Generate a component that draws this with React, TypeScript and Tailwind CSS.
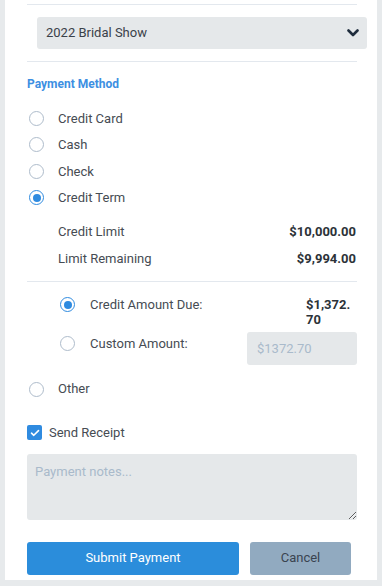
import { useState } from "react"

const methods = ["Credit Card", "Cash", "Check", "Credit Term"]

function Radio({ checked }: { checked?: boolean }) {
  return checked ? (
    <span className="flex h-[15px] w-[15px] shrink-0 items-center justify-center rounded-full border-[1.5px] border-[#2f8be0]">
      <span className="h-[8px] w-[8px] rounded-full bg-[#2f8be0]" />
    </span>
  ) : (
    <span className="h-[15px] w-[15px] shrink-0 rounded-full border-[1.5px] border-[#aebccb]" />
  )
}

export default function App() {
  const [method, setMethod] = useState("Credit Term")

  return (
    <div className="min-h-screen bg-[#e7eaec] font-['Roboto',sans-serif] text-[13px] text-[#464c53]">
      <div className="ml-[5px] h-[580px] w-[372px] bg-white pl-[22px] pr-[20px] pt-[4px]">
        <div className="h-px bg-[#e3e8ee]" />

        <div className="ml-[10px] mr-[-10px] mt-[12px] flex h-[32px] items-center justify-between rounded-[3px] bg-[#e5e8ea] pl-[9px] pr-[8px] text-[#3a4149]">
          <span>2022 Bridal Show</span>
          <svg width="12" height="8" viewBox="0 0 12 8">
            <path d="M1.5 1.5 L6 6 L10.5 1.5" fill="none" stroke="#1f2d3d" strokeWidth="2.6" strokeLinecap="round" strokeLinejoin="round" />
          </svg>
        </div>

        <div className="mt-[12px] h-px bg-[#e3e8ee]" />

        <div className="mt-[14px] text-[12px] font-bold leading-[16px] text-[#3d8fe2]">Payment Method</div>

        <div className="mt-[13px] flex flex-col">
          {methods.map((m) => (
            <label key={m} onClick={() => setMethod(m)} className="flex h-[26.5px] cursor-pointer items-center">
              <span className="ml-[2px] flex w-[29px]">
                <Radio checked={method === m} />
              </span>
              <span>{m}</span>
            </label>
          ))}
        </div>

        <div className="mt-[7px] flex flex-col pl-[31px]">
          <div className="flex h-[27px] items-center justify-between">
            <span>Credit Limit</span>
            <span className="mr-[1px] font-bold text-[#2c3238]">$10,000.00</span>
          </div>
          <div className="flex h-[27px] items-center justify-between">
            <span>Limit Remaining</span>
            <span className="mr-[1px] font-bold text-[#2c3238]">$9,994.00</span>
          </div>
        </div>

        <div className="mt-[9px] h-px bg-[#e3e8ee]" />

        <div className="mt-[14px] flex items-start pl-[33px]">
          <span className="mt-[1px] flex w-[30px]">
            <Radio checked />
          </span>
          <span className="flex-1 leading-[17px]">Credit Amount Due:</span>
          <span className="mt-[1px] w-[51px] font-bold leading-[15px] text-[#2c3238]">
            $1,372.
            <br />
            70
          </span>
        </div>

        <div className="mt-[5px] flex items-start pl-[33px]">
          <span className="mt-[4px] flex w-[30px]">
            <Radio />
          </span>
          <span className="mt-[4px] flex-1 leading-[15px]">Custom Amount:</span>
          <div className="flex h-[33px] w-[110px] items-center rounded-[3px] bg-[#e5e8ea] pl-[10px] text-[#a9bacb]">
            $1372.70
          </div>
        </div>

        <label className="mt-[11px] flex h-[26px] items-center">
          <span className="ml-[2px] flex w-[29px]">
            <Radio checked={method === "Other"} />
          </span>
          <span>Other</span>
        </label>

        <label className="mt-[21px] flex items-center gap-[7px]">
          <span className="flex h-[15px] w-[15px] items-center justify-center rounded-[2px] bg-[#2f8be0]">
            <svg width="10" height="8" viewBox="0 0 10 8">
              <path d="M1.5 4.2 L3.8 6.3 L8.5 1.6" fill="none" stroke="white" strokeWidth="1.6" strokeLinecap="round" strokeLinejoin="round" />
            </svg>
          </span>
          <span>Send Receipt</span>
        </label>

        <textarea
          placeholder="Payment notes..."
          className="mt-[11px] block h-[66px] w-full resize-y rounded-[3px] bg-[#e5e8ea] px-[8px] py-[8px] text-[13px] text-[#464c53] outline-none placeholder:text-[#a9bacb]"
        />

        <div className="mt-[22px] flex gap-[11px]">
          <button className="h-[33px] w-[212px] rounded-[3px] bg-[#2b8ddb] text-white">Submit Payment</button>
          <button className="h-[33px] w-[101px] rounded-[3px] bg-[#91aac0] text-[#3a4450]">Cancel</button>
        </div>
      </div>
    </div>
  )
}
